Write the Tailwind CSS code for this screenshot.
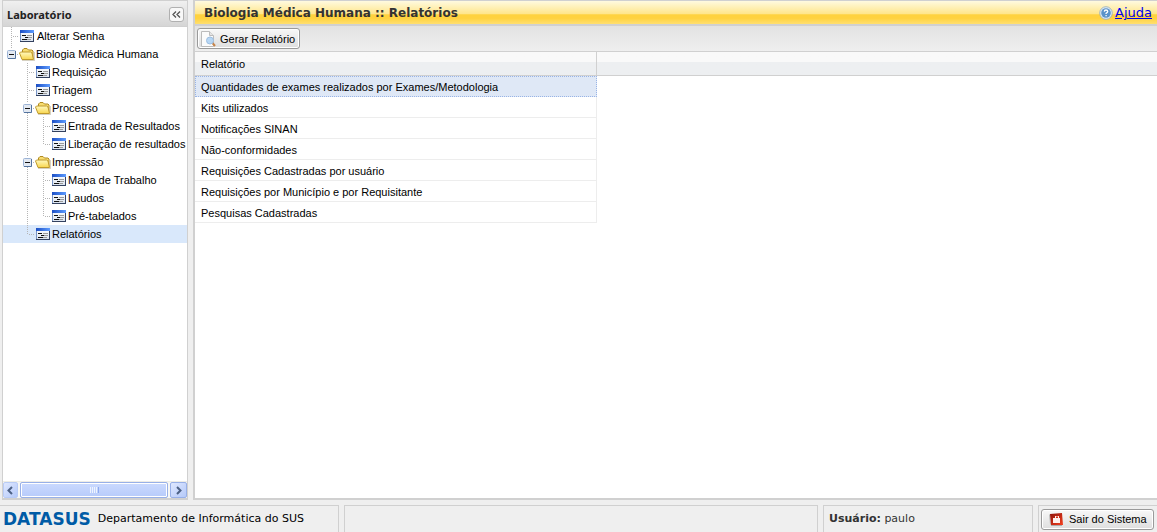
<!DOCTYPE html>
<html lang="pt-BR">
<head>
<meta charset="utf-8">
<meta name="viewport" content="width=device-width, initial-scale=1">
<title>Biologia Médica Humana :: Relatórios</title>
<script src="https://cdn.jsdelivr.net/npm/@tailwindcss/browser@4"></script>
</head>
<body class="flex h-screen flex-col overflow-hidden bg-[#efefef] font-['Liberation_Sans',Arial,sans-serif] text-[11px] leading-[18px] text-black">

<svg class="absolute size-0" aria-hidden="true">
  <defs>
    <linearGradient id="g-bar" x1="0" x2="1"><stop offset="0" stop-color="#1c4fc4"/><stop offset="1" stop-color="#5d9bff"/></linearGradient>
    <linearGradient id="g-page" x1="0" y1="0" x2="0" y2="1"><stop offset="0" stop-color="#fff"/><stop offset="1" stop-color="#d9e2ee"/></linearGradient>
    <linearGradient id="g-folder" x1="0" y1="0" x2="0" y2="1"><stop offset="0" stop-color="#fff9c0"/><stop offset="1" stop-color="#f8d64e"/></linearGradient>
    <linearGradient id="g-red" x1="0" y1="0" x2="1" y2="1"><stop offset="0" stop-color="#8d120a"/><stop offset="1" stop-color="#f5401f"/></linearGradient>
    <symbol id="form" viewBox="0 0 16 16">
      <path d="M1 2h14v12H1z" fill="url(#g-page)"/>
      <path d="M1 2h14v3H1z" fill="url(#g-bar)"/>
      <path d="M1.500 5v8.500" stroke="#7793c4"/><path d="M14.500 5v9M1 13.500h14" stroke="#33415f"/>
      <path d="M3 7.500h4M6 9.500h3M3 11.500h5" stroke="#111"/><path d="M8 7.500h5M9 9.500h4M8 11.500h4" stroke="#9a9a9a"/>
    </symbol>
    <symbol id="folder" viewBox="0 0 16 16">
      <path d="M3.500 13.500V4l1.500-1.500h3L9.500 4H13l1 1v8z" fill="#f7dc70" stroke="#b08a22"/>
      <path d="M.5 7l1-1h10l1.500 1 1.500 6.500H3z" fill="url(#g-folder)" stroke="#c09a2c"/>
      <path d="M3 14.500h12.500V6" fill="none" stroke="#8a7c50" stroke-opacity=".35"/>
    </symbol>
    <symbol id="tee" viewBox="0 0 16 18"><path d="M8.500 0v18" stroke="#b5b5b5" stroke-dasharray="1 1"/><path d="M10 9.500h6" stroke="#b5b5b5" stroke-dasharray="1 1"/></symbol>
    <symbol id="elbow" viewBox="0 0 16 18"><path d="M8.500 0v10" stroke="#b5b5b5" stroke-dasharray="1 1"/><path d="M10 9.500h6" stroke="#b5b5b5" stroke-dasharray="1 1"/></symbol>
    <symbol id="line" viewBox="0 0 16 18"><path d="M8.500 0v18" stroke="#b5b5b5" stroke-dasharray="1 1"/></symbol>
    <symbol id="minus" viewBox="0 0 16 18">
      <path d="M8.500 0v4M14 9.500h2" stroke="#b5b5b5" stroke-dasharray="1 1"/>
      <rect x="4.500" y="5.500" width="8" height="8" rx="1" fill="#e3e9f2" stroke="#9db4d6"/><path d="M5 13.500h7.500V6" fill="none" stroke="#54749f"/><path d="M6 9.500h5" stroke="#111"/>
    </symbol>
    <symbol id="minus-tee" viewBox="0 0 16 18"><path d="M8.500 14v4" stroke="#b5b5b5" stroke-dasharray="1 1"/><use href="#minus" width="16" height="18"/></symbol>
  </defs>
</svg>

<div class="flex min-h-0 flex-1 gap-[5px] pl-[2px]">

  <aside class="flex w-[186px] shrink-0 flex-col border border-b-2 border-[#d0d0d0] bg-white">
    <header class="flex h-[26px] shrink-0 items-center justify-between border-b border-[#d0d0d0] bg-linear-to-b from-[#f0f0f0] to-[#d5d5d5] pt-[2px] pr-[3px] pl-1">
      <h2 class="font-['Noto_Sans',Tahoma,sans-serif] text-[11px] font-bold text-[#222]">Laboratório</h2>
      <button type="button" aria-label="Recolher painel" class="flex size-[15px] items-center justify-center rounded-[3px] border border-[#b0b0b0] bg-[#f8f8f8]">
        <svg class="size-[11px] shrink-0" viewBox="0 0 11 11" fill="none" stroke="#555" stroke-width="1.300"><path d="M5 2.500L2 5.500l3 3M9 2.500l-3 3 3 3"/></svg>
      </button>
    </header>

    <nav aria-label="Laboratório" class="min-h-0 flex-1 overflow-hidden whitespace-nowrap">
      <ul>
        <li class="flex h-[18px]"><svg class="h-[18px] w-4 shrink-0"><use href="#tee"/></svg><a href="#" class="flex items-center gap-[2px]"><svg class="size-4 shrink-0"><use href="#form"/></svg>Alterar Senha</a></li>
        <li class="flex h-[18px]"><svg class="h-[18px] w-4 shrink-0"><use href="#minus"/></svg><a href="#" class="flex items-center gap-px"><svg class="size-4 shrink-0"><use href="#folder"/></svg>Biologia Médica Humana</a></li>
        <li class="flex h-[18px] pl-4"><svg class="h-[18px] w-4 shrink-0"><use href="#tee"/></svg><a href="#" class="flex items-center gap-px"><svg class="size-4 shrink-0"><use href="#form"/></svg>Requisição</a></li>
        <li class="flex h-[18px] pl-4"><svg class="h-[18px] w-4 shrink-0"><use href="#tee"/></svg><a href="#" class="flex items-center gap-px"><svg class="size-4 shrink-0"><use href="#form"/></svg>Triagem</a></li>
        <li class="flex h-[18px] pl-4"><svg class="h-[18px] w-4 shrink-0"><use href="#minus-tee"/></svg><a href="#" class="flex items-center gap-px"><svg class="size-4 shrink-0"><use href="#folder"/></svg>Processo</a></li>
        <li class="flex h-[18px] pl-4"><svg class="h-[18px] w-4 shrink-0"><use href="#line"/></svg><svg class="h-[18px] w-4 shrink-0"><use href="#tee"/></svg><a href="#" class="flex items-center gap-px"><svg class="size-4 shrink-0"><use href="#form"/></svg>Entrada de Resultados</a></li>
        <li class="flex h-[18px] pl-4"><svg class="h-[18px] w-4 shrink-0"><use href="#line"/></svg><svg class="h-[18px] w-4 shrink-0"><use href="#elbow"/></svg><a href="#" class="flex items-center gap-px"><svg class="size-4 shrink-0"><use href="#form"/></svg>Liberação de resultados</a></li>
        <li class="flex h-[18px] pl-4"><svg class="h-[18px] w-4 shrink-0"><use href="#minus-tee"/></svg><a href="#" class="flex items-center gap-px"><svg class="size-4 shrink-0"><use href="#folder"/></svg>Impressão</a></li>
        <li class="flex h-[18px] pl-4"><svg class="h-[18px] w-4 shrink-0"><use href="#line"/></svg><svg class="h-[18px] w-4 shrink-0"><use href="#tee"/></svg><a href="#" class="flex items-center gap-px"><svg class="size-4 shrink-0"><use href="#form"/></svg>Mapa de Trabalho</a></li>
        <li class="flex h-[18px] pl-4"><svg class="h-[18px] w-4 shrink-0"><use href="#line"/></svg><svg class="h-[18px] w-4 shrink-0"><use href="#tee"/></svg><a href="#" class="flex items-center gap-px"><svg class="size-4 shrink-0"><use href="#form"/></svg>Laudos</a></li>
        <li class="flex h-[18px] pl-4"><svg class="h-[18px] w-4 shrink-0"><use href="#line"/></svg><svg class="h-[18px] w-4 shrink-0"><use href="#elbow"/></svg><a href="#" class="flex items-center gap-px"><svg class="size-4 shrink-0"><use href="#form"/></svg>Pré-tabelados</a></li>
        <li class="flex h-[18px] bg-[#d9e8fb] pl-4"><svg class="h-[18px] w-4 shrink-0"><use href="#elbow"/></svg><a href="#" aria-current="page" class="flex items-center gap-px"><svg class="size-4 shrink-0"><use href="#form"/></svg>Relatórios</a></li>
      </ul>
    </nav>

    <div class="flex h-[17px] shrink-0 gap-[2px] border-t border-[#eeede5] bg-[#f7f7f4]">
      <button type="button" aria-label="Rolar para a esquerda" class="flex w-[15px] items-center justify-center rounded-[2px] border border-[#b8cbf6] bg-linear-to-br from-[#dfe8ff] to-[#b5c9f9]"><svg class="size-[9px] shrink-0" viewBox="0 0 9 9" fill="none" stroke="#4d6185" stroke-width="2"><path d="M6 1L2.500 4.500 6 8"/></svg></button>
      <div class="flex flex-1 items-center justify-center gap-px rounded-[2px] border border-[#98b0e8] bg-linear-to-b from-[#cbdafe] to-[#b7cbfb] shadow-[inset_0_0_0_1px_#fff]">
        <i class="h-[6px] w-px bg-[#eef4ff]"></i><i class="h-[6px] w-px bg-[#eef4ff]"></i><i class="h-[6px] w-px bg-[#eef4ff]"></i><i class="h-[6px] w-px bg-[#eef4ff]"></i><i class="h-[6px] w-px bg-[#8caaf0]"></i>
      </div>
      <button type="button" aria-label="Rolar para a direita" class="flex w-[17px] items-center justify-center rounded-[2px] border border-[#98b0e8] bg-linear-to-br from-[#dfe8ff] to-[#b5c9f9]"><svg class="size-[9px] shrink-0" viewBox="0 0 9 9" fill="none" stroke="#4d6185" stroke-width="2"><path d="M3 1l3.500 3.500L3 8"/></svg></button>
    </div>
  </aside>

  <main class="flex min-w-0 flex-1 flex-col border-t border-b-2 border-l-2 border-[#d0d0d0] bg-white">
    <header class="flex h-[25px] shrink-0 items-center justify-between border-b-2 border-[#d0d0d0] bg-linear-to-b from-[#fff8d8] from-0% via-[#ffe896] via-55% to-[#ffd75c] to-100% pt-px pr-[5px] pl-[9px] font-['DejaVu_Sans',Verdana,sans-serif] text-xs [background-image:linear-gradient(#fffae0,#ffe68c_55%,#ffd23f_60%,#ffd23f_75%,#ffdf70)]">
      <h1 class="font-bold text-[#333]">Biologia Médica Humana :: Relatórios</h1>
      <a href="#" class="flex items-center gap-[2px] text-[13px] text-[#0000ee] underline">
        <svg class="size-[14px]" viewBox="0 0 14 14"><circle cx="7" cy="7" r="6.300" fill="#e2ecf3" stroke="#8fa9bd" stroke-width=".8"/><circle cx="7" cy="7" r="4.800" fill="#5b93ca"/><path d="M5.300 5.600q.1-1.600 1.700-1.600t1.700 1.400q0 .9-1.600 1.900v.7M7.100 9v1.300" fill="none" stroke="#fff" stroke-width="1.300"/></svg>Ajuda</a>
    </header>

    <div class="flex h-[26px] shrink-0 items-center border-b border-[#d0d0d0] bg-linear-to-b from-[#e2e2e2] to-[#efefef] px-[2px]">
      <button type="button" class="flex h-[21px] items-center gap-1 rounded-[3px] border border-[#9a9a9a] bg-linear-to-b from-[#f8f8f8] to-[#dedede] pr-1 pl-[2px] shadow-[inset_0_0_0_1px_#fff]">
        <svg class="size-4" viewBox="0 0 16 16"><path d="M1.500.5h8l4 4v11h-12z" fill="#fbfbfb" stroke="#bcbcbc"/><path d="M9.500.5v4h4" fill="#e5e5e5" stroke="#bcbcbc"/><path d="M12.500 12l2.500 3" stroke="#c6854b" stroke-width="2"/><circle cx="10" cy="9.500" r="3.500" fill="#b7d7f5" stroke="#9dbee0"/></svg>Gerar Relatório</button>
    </div>

    <div class="min-h-0 flex-1 overflow-hidden">
      <table class="w-full table-fixed border-separate border-spacing-0 text-left">
        <colgroup><col class="w-[402px]"><col></colgroup>
        <thead>
          <tr class="h-6 bg-linear-to-b from-[#f9f9f9] from-42% to-[#edeff1] to-42%">
            <th scope="col" class="border-r border-b border-[#d0d0d0] px-[6px] font-normal">Relatório</th>
            <td class="border-b border-[#d0d0d0]"></td>
          </tr>
        </thead>
        <tbody>
          <tr class="h-[21px]"><td class="border border-dotted border-[#99b4e6] bg-[#dfe8f6] pr-[6px] pl-[5px]">Quantidades de exames realizados por Exames/Metodologia</td></tr>
          <tr class="h-[21px]"><td class="border-r border-b border-[#ededed] px-[6px] pt-[2px]">Kits utilizados</td></tr>
          <tr class="h-[21px]"><td class="border-r border-b border-[#ededed] px-[6px] pt-[2px]">Notificações SINAN</td></tr>
          <tr class="h-[21px]"><td class="border-r border-b border-[#ededed] px-[6px] pt-[2px]">Não-conformidades</td></tr>
          <tr class="h-[21px]"><td class="border-r border-b border-[#ededed] px-[6px] pt-[2px]">Requisições Cadastradas por usuário</td></tr>
          <tr class="h-[21px]"><td class="border-r border-b border-[#ededed] px-[6px] pt-[2px]">Requisições por Município e por Requisitante</td></tr>
          <tr class="h-[21px]"><td class="border-r border-b border-[#ededed] px-[6px] pt-[2px]">Pesquisas Cadastradas</td></tr>
        </tbody>
      </table>
    </div>
  </main>
</div>

<footer class="mt-[5px] flex h-[27px] shrink-0 gap-[5px] font-['DejaVu_Sans',Verdana,sans-serif] text-[11px]">
  <div class="flex w-[339px] items-center gap-[7px] border-t border-r border-[#d0d0d0] pl-[3px] whitespace-nowrap">
    <span class="text-[17px] font-bold text-[#005ba6]">DATASUS</span>
    <span>Departamento de Informática do SUS</span>
  </div>
  <div class="min-w-0 flex-1 border-x border-t border-[#d0d0d0]"></div>
  <div class="flex w-[210px] items-center border-x border-t border-[#d0d0d0] pl-[5px] text-[#333]"><p><b>Usuário:</b> paulo</p></div>
  <div class="flex w-[119px] items-center border-t border-l border-[#d0d0d0] pl-[2px]">
    <button type="button" class="flex h-[21px] w-[113px] items-center gap-[5px] rounded-[3px] border border-[#9a9a9a] bg-linear-to-b from-[#f8f8f8] to-[#dedede] pl-[7px] font-['Liberation_Sans',Arial,sans-serif] whitespace-nowrap shadow-[inset_0_0_0_1px_#fff]">
      <svg class="size-[15px]" viewBox="0 0 15 15"><path d="M0 3l1-1 1 11-1-1z" fill="#bbb"/><path d="M1 2l12-1 1 12H2z" fill="url(#g-red)"/><path d="M4 6h7v5H4zM6 4h4v2H6z" fill="#fff0ec"/><path d="M7 4.500h2V6H7z" fill="#d42c15"/><path d="M2 13.500h11" stroke="#aaa"/></svg>Sair do Sistema</button>
  </div>
</footer>
</body>
</html>
